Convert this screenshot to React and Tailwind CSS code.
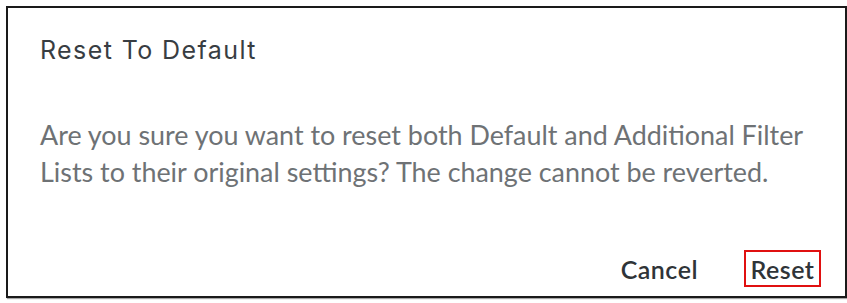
import React from "react";

const App = () => {
    return (
        <div className="w-[847px] h-[303px] bg-white pl-[6px] pt-[6px]">
            <div className="w-[841px] h-[292px] border-2 border-[#1a1a1a] bg-white flex flex-col shadow-[1px_1px_1px_rgba(0,0,0,0.35)]">
                <div className="pl-[32px] pt-[28px] text-[25px] leading-[28px] text-[#383d42] font-['Inter',sans-serif] tracking-[1.4px]">
                    Reset To Default
                </div>
                <p className="pl-[32px] pr-[10px] mt-[52px] text-[26.9px] leading-[37px] text-[#6e7275] font-['Lato',sans-serif] whitespace-nowrap">
                    Are you sure you want to reset both Default and Additional Filter
                    <br />
                    Lists to their original settings? The change cannot be reverted.
                </p>
                <div className="mt-auto mb-[9px] flex justify-end items-center pr-[24px] gap-[46px] font-['Lato',sans-serif] text-[25px] font-semibold text-[#2f3438] tracking-[0.5px]">
                    <button className="leading-[26px]">Cancel</button>
                    <button className="h-[37px] w-[77px] flex items-center justify-center leading-[26px] border-2 border-[#e01010]">Reset</button>
                </div>
            </div>
        </div>
    );
};

export default App;
